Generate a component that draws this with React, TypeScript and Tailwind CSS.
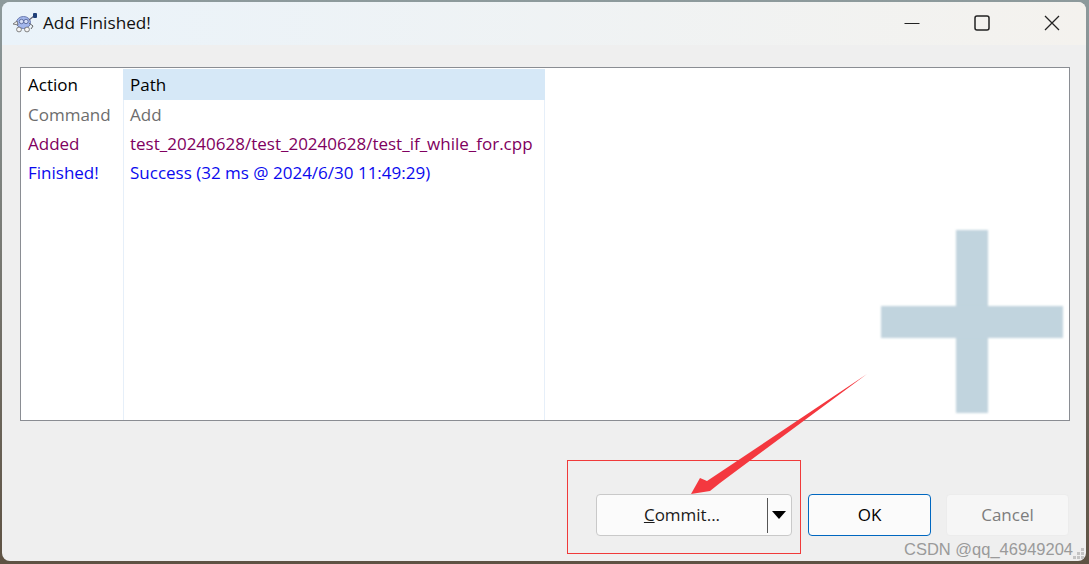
const font = { fontFamily: '"Open Sans", "Noto Sans", sans-serif' };

function TurtleIcon() {
  return (
    <svg width="26" height="22" viewBox="0 0 26 22" className="shrink-0">
      <ellipse cx="11.5" cy="10.5" rx="7" ry="6" fill="#a3b7ec" stroke="#6a7ab0" strokeWidth="1" />
      <circle cx="9.5" cy="9.5" r="2.2" fill="#d5def6" stroke="#4a5a90" strokeWidth="0.8" />
      <circle cx="14" cy="9.5" r="2.2" fill="#d5def6" stroke="#4a5a90" strokeWidth="0.8" />
      <path d="M1 12 L5 9 L6 13 Z" fill="#eee" stroke="#666" strokeWidth="0.8" />
      <circle cx="7" cy="17.5" r="2.4" fill="#f5f5f5" stroke="#666" strokeWidth="0.8" />
      <circle cx="15" cy="17.5" r="2.4" fill="#f5f5f5" stroke="#666" strokeWidth="0.8" />
      <path d="M17 11 L21 14 L19 17" fill="none" stroke="#666" strokeWidth="1" />
      <path d="M17 8 L22 4" stroke="#667" strokeWidth="1.2" />
      <rect x="21" y="1" width="4" height="5" rx="1" fill="#1f3f78" />
    </svg>
  );
}

function Row({ action, path, color }: { action: string; path: string; color: string }) {
  return (
    <div className={`flex h-[29.3px] items-center text-[17px] ${color}`}>
      <div className="w-[103px] pl-[7px]">{action}</div>
      <div className="w-[421px] pl-[6px] whitespace-nowrap">{path}</div>
    </div>
  );
}

export default function App() {
  return (
    <div
      className="h-[564px] w-[1089px] overflow-hidden bg-gradient-to-b from-[#8d9a9c] to-[#5e5243] pb-[3px] pl-[2px] pr-[3px] pt-[2px]"
      style={font}
    >
      <div className="relative flex h-full flex-col overflow-hidden rounded-lg bg-[#efefef]">
        <div className="flex h-[43px] items-center bg-gradient-to-r from-[#eaf3fa] to-[#f4f2ee] pb-[1px] pl-[10px]">
          <TurtleIcon />
          <span className="ml-[5px] text-[17.2px] text-[#111]">Add Finished!</span>
          <div className="ml-auto flex items-center">
            <svg width="16" height="16" viewBox="0 0 16 16" className="mr-[54px]">
              <path d="M0.5 8.5 H15.5" stroke="#222" strokeWidth="1.2" />
            </svg>
            <svg width="16" height="16" viewBox="0 0 16 16" className="mr-[54px]">
              <rect x="1" y="1" width="14" height="14" rx="2" fill="none" stroke="#222" strokeWidth="1.5" />
            </svg>
            <svg width="16" height="16" viewBox="0 0 16 16" className="mr-[26px]">
              <path d="M1 1 L15 15 M15 1 L1 15" stroke="#222" strokeWidth="1.3" />
            </svg>
          </div>
        </div>

        <div className="relative mx-[18px] mt-[22px] h-[354px] w-[1050px] border border-[#8a8d93] bg-white">
          <div className="absolute bottom-0 left-[102px] top-[32px] w-px bg-[#e6eff9]" />
          <div className="absolute bottom-0 left-[523px] top-[32px] w-px bg-[#e6eff9]" />
          <div className="flex h-[32px] items-start text-[17px] text-black">
            <div className="flex h-[33px] w-[102px] items-center pl-[7px]">Action</div>
            <div className="mt-[1px] flex h-[31px] w-[422px] items-center bg-[#d6e8f7] pl-[7px]">Path</div>
          </div>
          <Row action="Command" path="Add" color="text-[#6d6d6d]" />
          <Row action="Added" path="test_20240628/test_20240628/test_if_while_for.cpp" color="text-[#800060]" />
          <Row action="Finished!" path="Success (32 ms @ 2024/6/30 11:49:29)" color="text-[#0a0aee]" />
          {/* watermark plus */}
          <div className="absolute left-[935px] top-[162px] h-[183px] w-[32px] bg-[#c1d4de] blur-[1px]" />
          <div className="absolute left-[860px] top-[238px] h-[32px] w-[182px] bg-[#c1d4de] blur-[1px]" />
        </div>

        <div className="mr-[17px] mt-[73px] flex justify-end gap-[15px] text-[17px]">
          <div className="mr-[1px] flex h-[42px] w-[196px] items-center rounded border border-[#c9c9c9] bg-[#fbfbfb] text-[#1a1a1a]">
            <span className="flex-1 text-center">
              <span className="underline">C</span>ommit...
            </span>
            <div className="h-[35px] w-px bg-[#555]" />
            <svg width="23" height="10" viewBox="0 0 23 10">
              <path d="M4 1 H18 L11 9 Z" fill="#000" />
            </svg>
          </div>
          <div className="flex h-[42px] w-[123px] items-center justify-center rounded border border-[#0067c0] bg-[#fbfbfb] text-black">
            OK
          </div>
          <div className="flex h-[42px] w-[123px] items-center justify-center rounded border border-[#ececec] bg-[#f6f6f6] text-[#7d7d7d]">
            Cancel
          </div>
        </div>

        {/* annotations */}
        <div className="absolute left-[565px] top-[458px] h-[94px] w-[234px] border border-[#f03a3a]" />
        <svg className="absolute left-[680px] top-[365px]" width="190" height="130" viewBox="0 0 190 130">
          <path d="M185 7 L25 114 L18 111 L9 127 L28 124 L38 116 Z" fill="#f4383f" />
        </svg>
        <div
          className="absolute left-[902px] top-[535px] text-[16.5px] text-[#9a9a9a]"
          style={{ fontFamily: '"Liberation Sans", sans-serif' }}
        >
          CSDN @qq_46949204
        </div>
        <svg className="absolute bottom-0 right-0" width="14" height="14" viewBox="0 0 14 14">
          <path d="M9 1h3v3H9zM5 5h3v3H5zM9 5h3v3H9zM1 9h3v3H1zM5 9h3v3H5zM9 9h3v3H9z" fill="#c4c4c4" />
        </svg>
      </div>
    </div>
  );
}
